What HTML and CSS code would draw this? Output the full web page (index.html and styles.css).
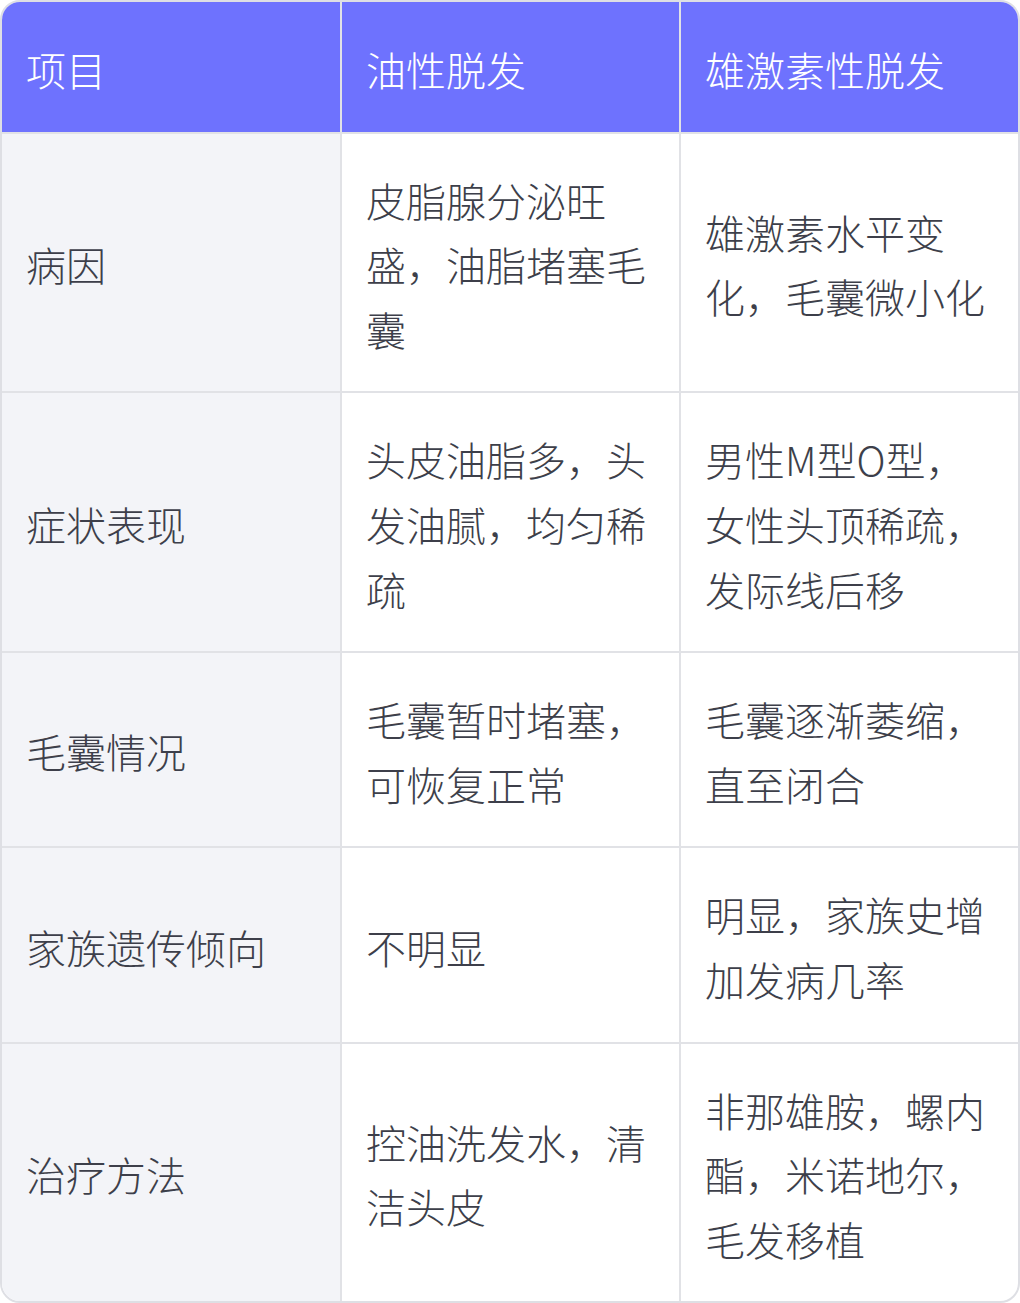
FILE: index.html
```html
<!DOCTYPE html>
<html lang="zh">
<head>
<meta charset="utf-8">
<link rel="stylesheet" href="styles.css">
</head>
<body>
<div class="wrap">
<table class="cmp">
<colgroup><col class="c1"><col class="c2"><col class="c3"></colgroup>
<thead>
<tr><th>项目</th><th>油性脱发</th><th>雄激素性脱发</th></tr>
</thead>
<tbody>
<tr><td>病因</td><td>皮脂腺分泌旺盛，油脂堵塞毛囊</td><td>雄激素水平变化，毛囊微小化</td></tr>
<tr><td>症状表现</td><td>头皮油脂多，头发油腻，均匀稀疏</td><td>男性M型O型，女性头顶稀疏，发际线后移</td></tr>
<tr><td>毛囊情况</td><td>毛囊暂时堵塞，可恢复正常</td><td>毛囊逐渐萎缩，直至闭合</td></tr>
<tr><td>家族遗传倾向</td><td>不明显</td><td>明显，家族史增加发病几率</td></tr>
<tr class="last"><td>治疗方法</td><td>控油洗发水，清洁头皮</td><td>非那雄胺，螺内酯，米诺地尔，毛发移植</td></tr>
</tbody>
</table>
</div>
</body>
</html>
```
FILE: styles.css
```css
html, body {
  margin: 0;
  padding: 0;
  background: #ffffff;
}
.wrap {
  width: 1020px;
  height: 1303px;
  box-sizing: border-box;
  border: 2px solid #dedfe4;
  border-radius: 20px;
  overflow: hidden;
}
.cmp {
  width: 100%;
  border-collapse: separate;
  border-spacing: 0;
  table-layout: fixed;
  font-family: "Noto Sans CJK SC", "Noto Sans", sans-serif;
  font-size: 40px;
  font-weight: 300;
  line-height: 64.6px;
  color: #3d3f4a;
}
.c1 { width: 340px; }
.c2 { width: 339px; }
.c3 { width: 337px; }
.cmp th, .cmp td {
  text-align: left;
  vertical-align: middle;
  padding: 34px 24px 30px 24px;
  border-right: 2px solid #e1e2e6;
  border-bottom: 2px solid #e1e2e6;
  font-weight: 300;
}
.cmp th:last-child, .cmp td:last-child {
  border-right: none;
}
.cmp tr.last td {
  border-bottom: none;
}
.cmp th {
  background: #6e72fe;
  color: #ffffff;
  padding-top: 35px;
}
.cmp td:first-child {
  background: #f3f4f8;
}
```
